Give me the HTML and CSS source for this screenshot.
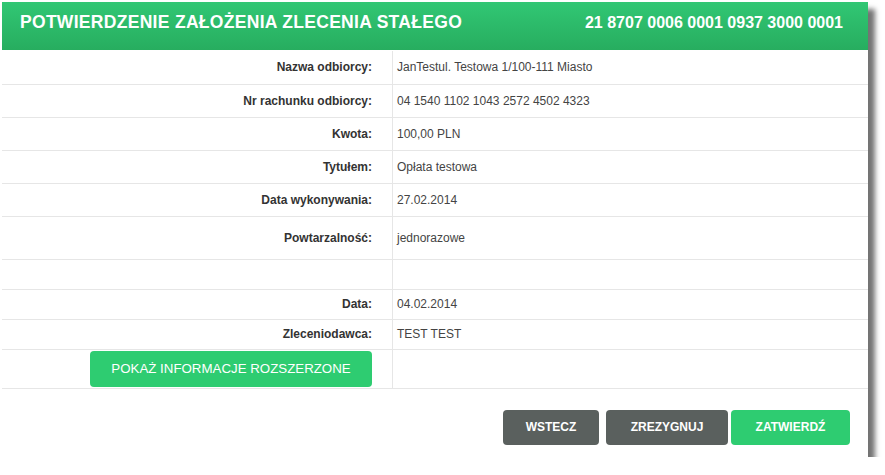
FILE: index.html
```html
<!DOCTYPE html>
<html lang="pl">
<head>
<meta charset="utf-8">
<title>Potwierdzenie</title>
<link rel="stylesheet" href="styles.css">
</head>
<body>
<div class="panel">
  <div class="header">
    <div class="title">POTWIERDZENIE ZAŁOŻENIA ZLECENIA STAŁEGO</div>
    <div class="account">21 8707 0006 0001 0937 3000 0001</div>
  </div>
  <table class="details">
    <tr class="r33"><th>Nazwa odbiorcy:</th><td>JanTestul. Testowa 1/100-111 Miasto</td></tr>
    <tr class="r33"><th>Nr rachunku odbiorcy:</th><td>04 1540 1102 1043 2572 4502 4323</td></tr>
    <tr class="r33"><th>Kwota:</th><td>100,00 PLN</td></tr>
    <tr class="r33"><th>Tytułem:</th><td>Opłata testowa</td></tr>
    <tr class="r33"><th>Data wykonywania:</th><td>27.02.2014</td></tr>
    <tr class="r43"><th>Powtarzalność:</th><td>jednorazowe</td></tr>
    <tr class="r30"><th></th><td></td></tr>
    <tr class="r30"><th>Data:</th><td>04.02.2014</td></tr>
    <tr class="r30"><th>Zleceniodawca:</th><td>TEST TEST</td></tr>
    <tr class="r39"><th><button class="btn btn-green btn-wide">POKAŻ INFORMACJE ROZSZERZONE</button></th><td></td></tr>
  </table>
  <div class="footer">
    <button class="btn btn-grey btn-back">WSTECZ</button>
    <button class="btn btn-grey btn-cancel">ZREZYGNUJ</button>
    <button class="btn btn-green btn-ok">ZATWIERDŹ</button>
  </div>
</div>
</body>
</html>
```
FILE: styles.css
```css
html, body {
  margin: 0;
  padding: 0;
  background: #ffffff;
}
body {
  font-family: "Liberation Sans", Arial, sans-serif;
}
.panel {
  margin: 2px 0 0 2px;
  width: 866px;
  height: 455px;
  background: #ffffff;
  box-shadow: 7px 7px 5px rgba(0, 0, 0, 0.55);
  display: flex;
  flex-direction: column;
}
.header {
  height: 48px;
  box-sizing: border-box;
  background: linear-gradient(#31c774, #27ad5f);
  color: #ffffff;
  display: flex;
  align-items: center;
  justify-content: space-between;
  padding: 0 25px 7px 18px;
  font-weight: bold;
}
.title {
  font-size: 17.5px;
  letter-spacing: 0.3px;
}
.account {
  font-size: 16px;
}
.details {
  margin-top: 1px;
  width: 100%;
  border-collapse: collapse;
  font-size: 12px;
}
.details tr {
  border-bottom: 1px solid #e6e6e6;
}
.details th {
  width: 370px;
  padding: 0 20px 0 0;
  text-align: right;
  font-weight: bold;
  color: #333333;
  border-right: 1px solid #e6e6e6;
}
.details td {
  padding: 0 0 0 4px;
  color: #444444;
}
.r33 { height: 33px; }
.r43 { height: 43px; }
.r30 { height: 30px; }
.r39 { height: 39px; }
.btn {
  border: none;
  border-radius: 4px;
  color: #ffffff;
  font-family: "Liberation Sans", Arial, sans-serif;
  padding: 0;
  cursor: pointer;
}
.btn-green {
  background: #2ecc71;
}
.btn-grey {
  background: #5a605e;
}
.btn-wide {
  width: 282px;
  height: 36px;
  font-size: 13.3px;
  vertical-align: middle;
}
.footer {
  display: flex;
  justify-content: flex-end;
  padding: 21px 18px 0 0;
}
.footer .btn {
  height: 35px;
  font-size: 12px;
  font-weight: bold;
}
.btn-back { width: 96px; }
.btn-cancel { width: 122px; margin-left: 7px; }
.btn-ok { width: 119px; margin-left: 3px; }
```
